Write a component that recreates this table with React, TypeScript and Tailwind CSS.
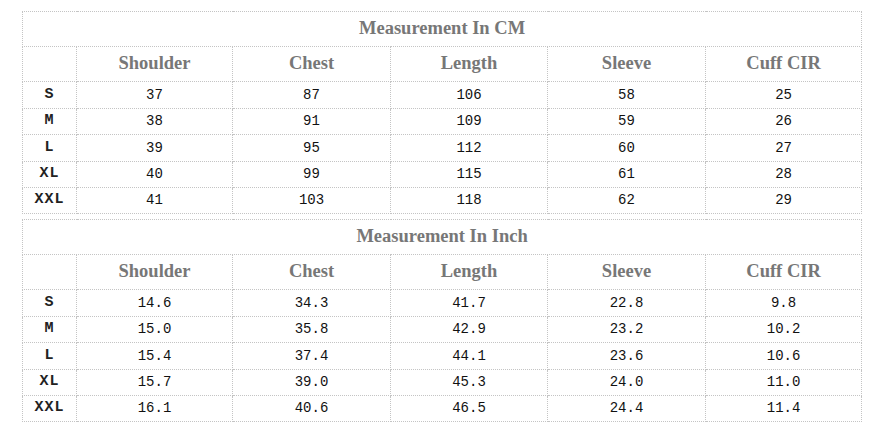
import React from "react";

const cols = ["Shoulder", "Chest", "Length", "Sleeve", "Cuff CIR"];
const sizes = ["S", "M", "L", "XL", "XXL"];
const cm = [
  ["37", "87", "106", "58", "25"],
  ["38", "91", "109", "59", "26"],
  ["39", "95", "112", "60", "27"],
  ["40", "99", "115", "61", "28"],
  ["41", "103", "118", "62", "29"],
];
const inch = [
  ["14.6", "34.3", "41.7", "22.8", "9.8"],
  ["15.0", "35.8", "42.9", "23.2", "10.2"],
  ["15.4", "37.4", "44.1", "23.6", "10.6"],
  ["15.7", "39.0", "45.3", "24.0", "11.0"],
  ["16.1", "40.6", "46.5", "24.4", "11.4"],
];
const rowH = ["h-[27px]", "h-[26px]", "h-[27px]", "h-[26px]", "h-[26px]"];
const cell = "border border-dotted border-[#c4c4c4] p-0 text-center";
const serif = { fontFamily: '"Liberation Serif", "Times New Roman", serif' };
const mono = { fontFamily: '"Liberation Mono", "Courier New", monospace' };

function Table({ title, data }: { title: string; data: string[][] }) {
  return (
    <table className="w-[839px] table-fixed border-collapse border border-dotted border-[#c4c4c4]">
      <colgroup>
        <col className="w-[54px]" />
        <col className="w-[156px]" />
        <col className="w-[158px]" />
        <col className="w-[157px]" />
        <col className="w-[158px]" />
        <col className="w-[156px]" />
      </colgroup>
      <tbody>
        <tr className="h-[35px]">
          <td colSpan={6} className={`${cell} text-[18.5px] font-bold text-[#777]`} style={serif}>
            {title}
          </td>
        </tr>
        <tr className="h-[35px]">
          <td className={cell}></td>
          {cols.map((c) => (
            <td key={c} className={`${cell} text-[18.5px] font-bold text-[#777]`} style={serif}>
              {c}
            </td>
          ))}
        </tr>
        {data.map((row, i) => (
          <tr key={i} className={rowH[i]}>
            <td className={`${cell} text-[15px] font-bold text-[#222] tracking-[1px]`} style={mono}>
              {sizes[i]}
            </td>
            {row.map((v, j) => (
              <td key={j} className={`${cell} text-[14px] text-[#111]`} style={mono}>
                {v}
              </td>
            ))}
          </tr>
        ))}
      </tbody>
    </table>
  );
}

export default function App() {
  return (
    <div className="w-[872px] h-[432px] bg-white pl-[22px] pt-[11px] flex flex-col gap-[5px]">
      <Table title="Measurement In CM" data={cm} />
      <Table title="Measurement In Inch" data={inch} />
    </div>
  );
}
